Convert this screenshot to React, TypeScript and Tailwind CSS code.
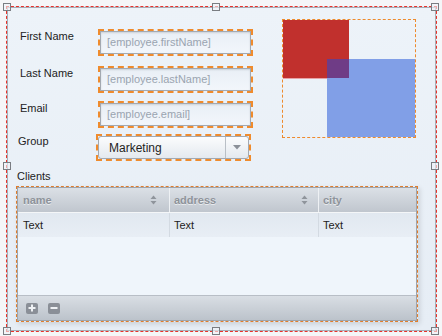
import React from "react";

const font = { fontFamily: '"Liberation Sans", Arial, sans-serif' };

function Handle({ className }: { className: string }) {
  return (
    <div
      className={`absolute w-[8px] h-[8px] border border-[#7a7d82] bg-[rgba(240,244,248,0.6)] ${className}`}
    />
  );
}

function TextField({ placeholder }: { placeholder: string }) {
  return (
    <div className="w-[155px] h-[27px] border-2 border-dashed border-[#ef8b2d]">
      <div className="h-full border border-[#a3a9b1] bg-gradient-to-b from-[#e9eff6] to-[#f2f6fb] shadow-[inset_0_1px_2px_rgba(0,0,0,0.12)] flex items-center pl-[6px] text-[11px] text-[#9aa4b0]">
        {placeholder}
      </div>
    </div>
  );
}

function SortIcon() {
  return (
    <svg width="7" height="10" viewBox="0 0 7 10">
      <path d="M3.5 0.5 L6.5 4 L0.5 4 Z" fill="#8f949b" />
      <path d="M3.5 9.5 L6.5 6 L0.5 6 Z" fill="#8f949b" />
    </svg>
  );
}

export default function App() {
  return (
    <div
      className="w-[442px] h-[336px] bg-[#f5f6f8] overflow-hidden pt-[6px] pl-[6px]"
      style={font}
    >
      <div className="relative w-[431px] h-[326px] border border-dashed border-[#e8322a] shadow-[inset_0_0_0_1px_#a7aeb6] bg-gradient-to-b from-[#edf3f9] to-[#e6edf5] text-[#222]">
        <Handle className="left-[-4px] top-[-4px]" />
        <Handle className="left-[205px] top-[-4px]" />
        <Handle className="left-[424px] top-[-4px]" />
        <Handle className="left-[-4px] top-[155px]" />
        <Handle className="left-[424px] top-[155px]" />
        <Handle className="left-[-4px] top-[320px]" />
        <Handle className="left-[205px] top-[320px]" />
        <Handle className="left-[424px] top-[320px]" />

        <div className="flex items-start">
          <div className="w-[275px] pt-[22px] text-[11px]">
            <div className="flex items-start h-[27px]">
              <div className="pl-[13px] w-[91px] leading-[14px]">First Name</div>
              <TextField placeholder="[employee.firstName]" />
            </div>
            <div className="flex items-start h-[27px] mt-[10px]">
              <div className="pl-[13px] w-[91px] leading-[14px]">Last Name</div>
              <TextField placeholder="[employee.lastName]" />
            </div>
            <div className="flex items-start h-[27px] mt-[8px]">
              <div className="pl-[13px] w-[91px] leading-[14px]">Email</div>
              <TextField placeholder="[employee.email]" />
            </div>
            <div className="flex items-start h-[27px] mt-[6px]">
              <div className="pl-[11px] w-[89px] leading-[14px]">Group</div>
              <div className="w-[155px] h-[27px] border-2 border-dashed border-[#ef8b2d]">
                <div className="h-full flex border border-[#a3a9b1] rounded-[3px] bg-gradient-to-b from-[#fbfcfd] to-[#e4e9ef]">
                  <div className="flex-1 flex items-center pl-[10px] text-[12px] text-[#1f1f1f] border-r border-[#b9bfc6]">
                    Marketing
                  </div>
                  <div className="w-[22px] flex items-center justify-center">
                    <svg width="8" height="5" viewBox="0 0 8 5">
                      <path d="M0 0 L8 0 L4 4.5 Z" fill="#8b9098" />
                    </svg>
                  </div>
                </div>
              </div>
            </div>
          </div>
          <div className="mt-[12px] w-[134px] h-[119px] border border-dashed border-[#ee8a2c]">
            <svg width="132" height="117" viewBox="0 0 132 117" className="block">
              <rect x="0" y="0" width="66" height="58" fill="#c1302d" />
              <rect x="0" y="58" width="44" height="1" fill="#e6a3a6" />
              <rect x="44" y="39" width="88" height="78" fill="#819fe7" />
              <rect x="44" y="39" width="22" height="19" fill="#6f3c86" />
            </svg>
          </div>
        </div>

        <div className="pl-[10px] mt-[8px] leading-[14px] text-[11px]">Clients</div>

        <div className="ml-[9px] mt-[3px] w-[402px] h-[136px] border border-dashed border-[#e07d2c] flex flex-col shadow-[2px_2px_5px_rgba(0,0,0,0.12)]">
          <div className="flex-1 flex flex-col border border-[#9ea5ad] bg-[#eff5fb]">
            <div className="h-[25px] grid grid-cols-[152px_149px_1fr] border-b border-[#f4f6f8] bg-gradient-to-b from-[#dbe0e6] to-[#c0c6ce] text-[11px] font-bold text-[#8e939a] [text-shadow:0_1px_0_rgba(255,255,255,0.6)]">
              <div className="flex items-center justify-between pl-[5px] pr-[12px] border-r border-[#eef1f4]">
                <span>name</span>
                <SortIcon />
              </div>
              <div className="flex items-center justify-between pl-[4px] pr-[10px] border-r border-[#eef1f4]">
                <span>address</span>
                <SortIcon />
              </div>
              <div className="flex items-center pl-[4px]">
                <span>city</span>
              </div>
            </div>
            <div className="h-[24px] grid grid-cols-[152px_149px_1fr] bg-gradient-to-b from-[#e1e8f0] to-[#e8eef5] text-[11px] text-[#222]">
              <div className="flex items-center pl-[5px] border-r border-[#d3dae2]">Text</div>
              <div className="flex items-center pl-[4px] border-r border-[#d3dae2]">Text</div>
              <div className="flex items-center pl-[4px]">Text</div>
            </div>
            <div className="flex-1" />
            <div className="h-[25px] flex items-center gap-[10px] pl-[8px] border-t border-[#b8bec6] bg-gradient-to-b from-[#d9dee4] to-[#bcc3cb]">
              <div className="w-[12px] h-[11px] rounded-[2px] bg-[#8a8f97] flex items-center justify-center">
                <svg width="8" height="8" viewBox="0 0 8 8">
                  <rect x="3" y="0.5" width="2" height="7" fill="#eef1f4" />
                  <rect x="0.5" y="3" width="7" height="2" fill="#eef1f4" />
                </svg>
              </div>
              <div className="w-[12px] h-[11px] rounded-[2px] bg-[#8a8f97] flex items-center justify-center">
                <svg width="8" height="8" viewBox="0 0 8 8">
                  <rect x="0.5" y="3" width="7" height="2" fill="#eef1f4" />
                </svg>
              </div>
            </div>
          </div>
        </div>
      </div>
    </div>
  );
}
